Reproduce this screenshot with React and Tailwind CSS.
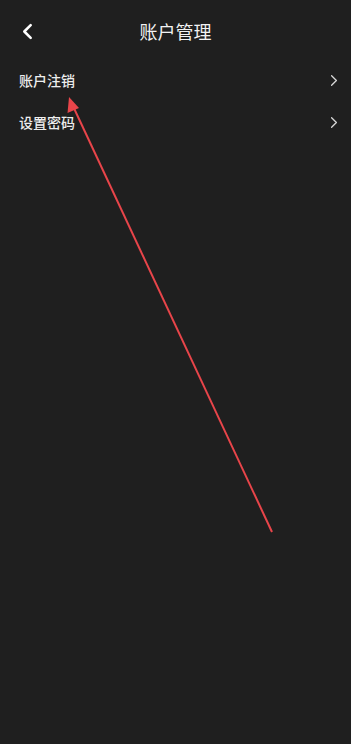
import React from 'react';

const font = { fontFamily: '"Noto Sans CJK SC", "Noto Sans", sans-serif' };

const items = ['账户注销', '设置密码'];

function Chevron({ className, dir = 'right', strokeWidth = '1.6' }) {
  return (
    <svg viewBox="0 0 10 16" className={className} fill="none" stroke="currentColor" strokeWidth={strokeWidth} strokeLinecap="round" strokeLinejoin="round">
      {dir === 'right' ? <path d="M2 2l6 6-6 6" /> : <path d="M8 2L2 8l6 6" />}
    </svg>
  );
}

export default function App() {
  return (
    <div className="relative w-[351px] h-[744px] bg-[#1f1f1f] text-white overflow-hidden" style={font}>
      {/* header */}
      <div className="relative flex items-center justify-center h-[62px]">
        <button className="absolute left-[22px] top-[23px] text-white">
          <Chevron dir="left" className="w-[11px] h-[17px]" strokeWidth="2.4" />
        </button>
        <h1 className="text-[18px] leading-none text-[#f2f2f2]">账户管理</h1>
      </div>

      <div className="flex flex-col -mt-[3px]">
        {items.map((t) => (
          <div key={t} className="flex items-center justify-between h-[42px] pl-[19px] pr-[13px]">
            <span className="text-[14px] font-medium text-[#ededed]">{t}</span>
            <Chevron className="w-[8px] h-[13px] text-[#d8d8d8]" />
          </div>
        ))}
      </div>

      {/* annotation arrow */}
      <svg className="absolute inset-0 pointer-events-none" width="351" height="744" viewBox="0 0 351 744">
        <line x1="272" y1="532" x2="72" y2="104" stroke="#e8454a" strokeWidth="2" />
        <polygon points="69,97 67.5,113 79,108" fill="#e8454a" />
      </svg>
    </div>
  );
}
